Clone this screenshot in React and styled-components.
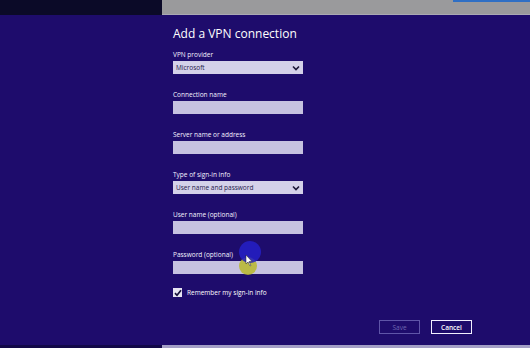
import React from "react";
import styled, { createGlobalStyle } from "styled-components";

const GlobalStyle = createGlobalStyle`
  html, body {
    margin: 0;
    padding: 0;
    background: #1e0c6c;
  }
  * {
    box-sizing: border-box;
  }
`;

const Screen = styled.div`
  position: relative;
  width: 530px;
  height: 348px;
  display: flex;
  flex-direction: column;
  background: #1e0c6c;
  font-family: "Open Sans", "Noto Sans", sans-serif;
  color: #ffffff;
  overflow: hidden;
`;

const TopStrip = styled.div`
  display: flex;
  height: 15px;
`;

const Shade = styled.div`
  width: 162px;
  background: #0b0a28;
`;

const GrayBar = styled.div`
  flex: 1;
  display: flex;
  justify-content: flex-end;
  align-items: flex-start;
  background: #9a9a9c;
  border-bottom: 1px solid #aaa9b4;
`;

const AccentLine = styled.div`
  width: 77px;
  height: 2px;
  background: #2f6fc4;
`;

const Main = styled.div`
  flex: 1;
  display: flex;
  flex-direction: column;
  padding: 11px 0 0 173px;
`;

const Title = styled.h1`
  margin: 0 0 8px;
  font-size: 12px;
  font-weight: 400;
  line-height: 16px;
`;

const Form = styled.div`
  width: 130px;
  display: flex;
  flex-direction: column;
  gap: 16px;
`;

const Field = styled.div`
  display: flex;
  flex-direction: column;
  gap: 1px;
`;

const Label = styled.label`
  font-size: 6.5px;
  line-height: 10px;
  color: #f4f2ff;
`;

const TextBox = styled.div`
  height: 13px;
  background: #c6c2e0;
`;

const Select = styled.div`
  height: 13px;
  display: flex;
  align-items: center;
  justify-content: space-between;
  padding: 0 3px 0 3px;
  background: #d4d1e9;
  color: #25204a;
  font-size: 6.5px;
`;

const Chevron = () => (
  <svg width="8" height="6" viewBox="0 0 8 6">
    <path d="M1 1.5 L4 4.5 L7 1.5" fill="none" stroke="#1c1838" strokeWidth="1.6" />
  </svg>
);

const CheckRow = styled.div`
  display: flex;
  align-items: center;
  gap: 5px;
  margin-top: -2px;
  font-size: 6.5px;
  color: #ffffff;
`;

const CheckBox = styled.span`
  width: 9px;
  height: 9px;
  display: flex;
  align-items: center;
  justify-content: center;
  background: #e6e4f2;
`;

const Footer = styled.div`
  margin-top: auto;
  display: flex;
  justify-content: flex-end;
  gap: 11px;
  padding: 0 58px 11px 0;
`;

const Button = styled.button`
  width: 41px;
  height: 14px;
  padding: 0;
  background: transparent;
  border: 1px solid ${(p) => (p.disabled ? "#5f55a8" : "#f2f0ff")};
  color: ${(p) => (p.disabled ? "#6e66b0" : "#ffffff")};
  font-family: inherit;
  font-size: 6.5px;
  font-weight: ${(p) => (p.disabled ? 400 : 600)};
`;

const BottomEdge = styled.div`
  display: flex;
  height: 3px;
`;

const EdgeLeft = styled.div`
  width: 162px;
  background: #120848;
`;

const EdgeRight = styled.div`
  flex: 1;
  background: #a49fc6;
`;

const ClickMark = styled.svg`
  position: absolute;
  left: 232px;
  top: 238px;
`;

const fields = [
  { label: "VPN provider", select: "Microsoft" },
  { label: "Connection name" },
  { label: "Server name or address" },
  { label: "Type of sign-in info", select: "User name and password" },
  { label: "User name (optional)" },
  { label: "Password (optional)" },
];

const App = () => (
  <>
    <GlobalStyle />
    <Screen>
      <TopStrip>
        <Shade />
        <GrayBar>
          <AccentLine />
        </GrayBar>
      </TopStrip>
      <Main>
        <Title>Add a VPN connection</Title>
        <Form>
          {fields.map((f) => (
            <Field key={f.label}>
              <Label>{f.label}</Label>
              {f.select ? (
                <Select>
                  <span>{f.select}</span>
                  <Chevron />
                </Select>
              ) : (
                <TextBox />
              )}
            </Field>
          ))}
          <CheckRow>
            <CheckBox>
              <svg width="8" height="8" viewBox="0 0 8 8">
                <path d="M1 4.2 L3 6.3 L7 1.2" fill="none" stroke="#15103a" strokeWidth="1.7" />
              </svg>
            </CheckBox>
            Remember my sign-in info
          </CheckRow>
        </Form>
        <Footer>
          <Button disabled>Save</Button>
          <Button>Cancel</Button>
        </Footer>
      </Main>
      <BottomEdge>
        <EdgeLeft />
        <EdgeRight />
      </BottomEdge>
      <ClickMark width="32" height="40" viewBox="0 0 32 40">
        <circle cx="16" cy="28" r="9" fill="#b8b82a" opacity="0.85" />
        <circle cx="18" cy="14" r="11" fill="#2420c8" opacity="0.85" />
        <path d="M14 17 L14 26 L16 24 L18 28 L19 27.4 L17 23.6 L20 23.6 Z" fill="#ffffff" stroke="#222" strokeWidth="0.5" />
      </ClickMark>
    </Screen>
  </>
);

export default App;
